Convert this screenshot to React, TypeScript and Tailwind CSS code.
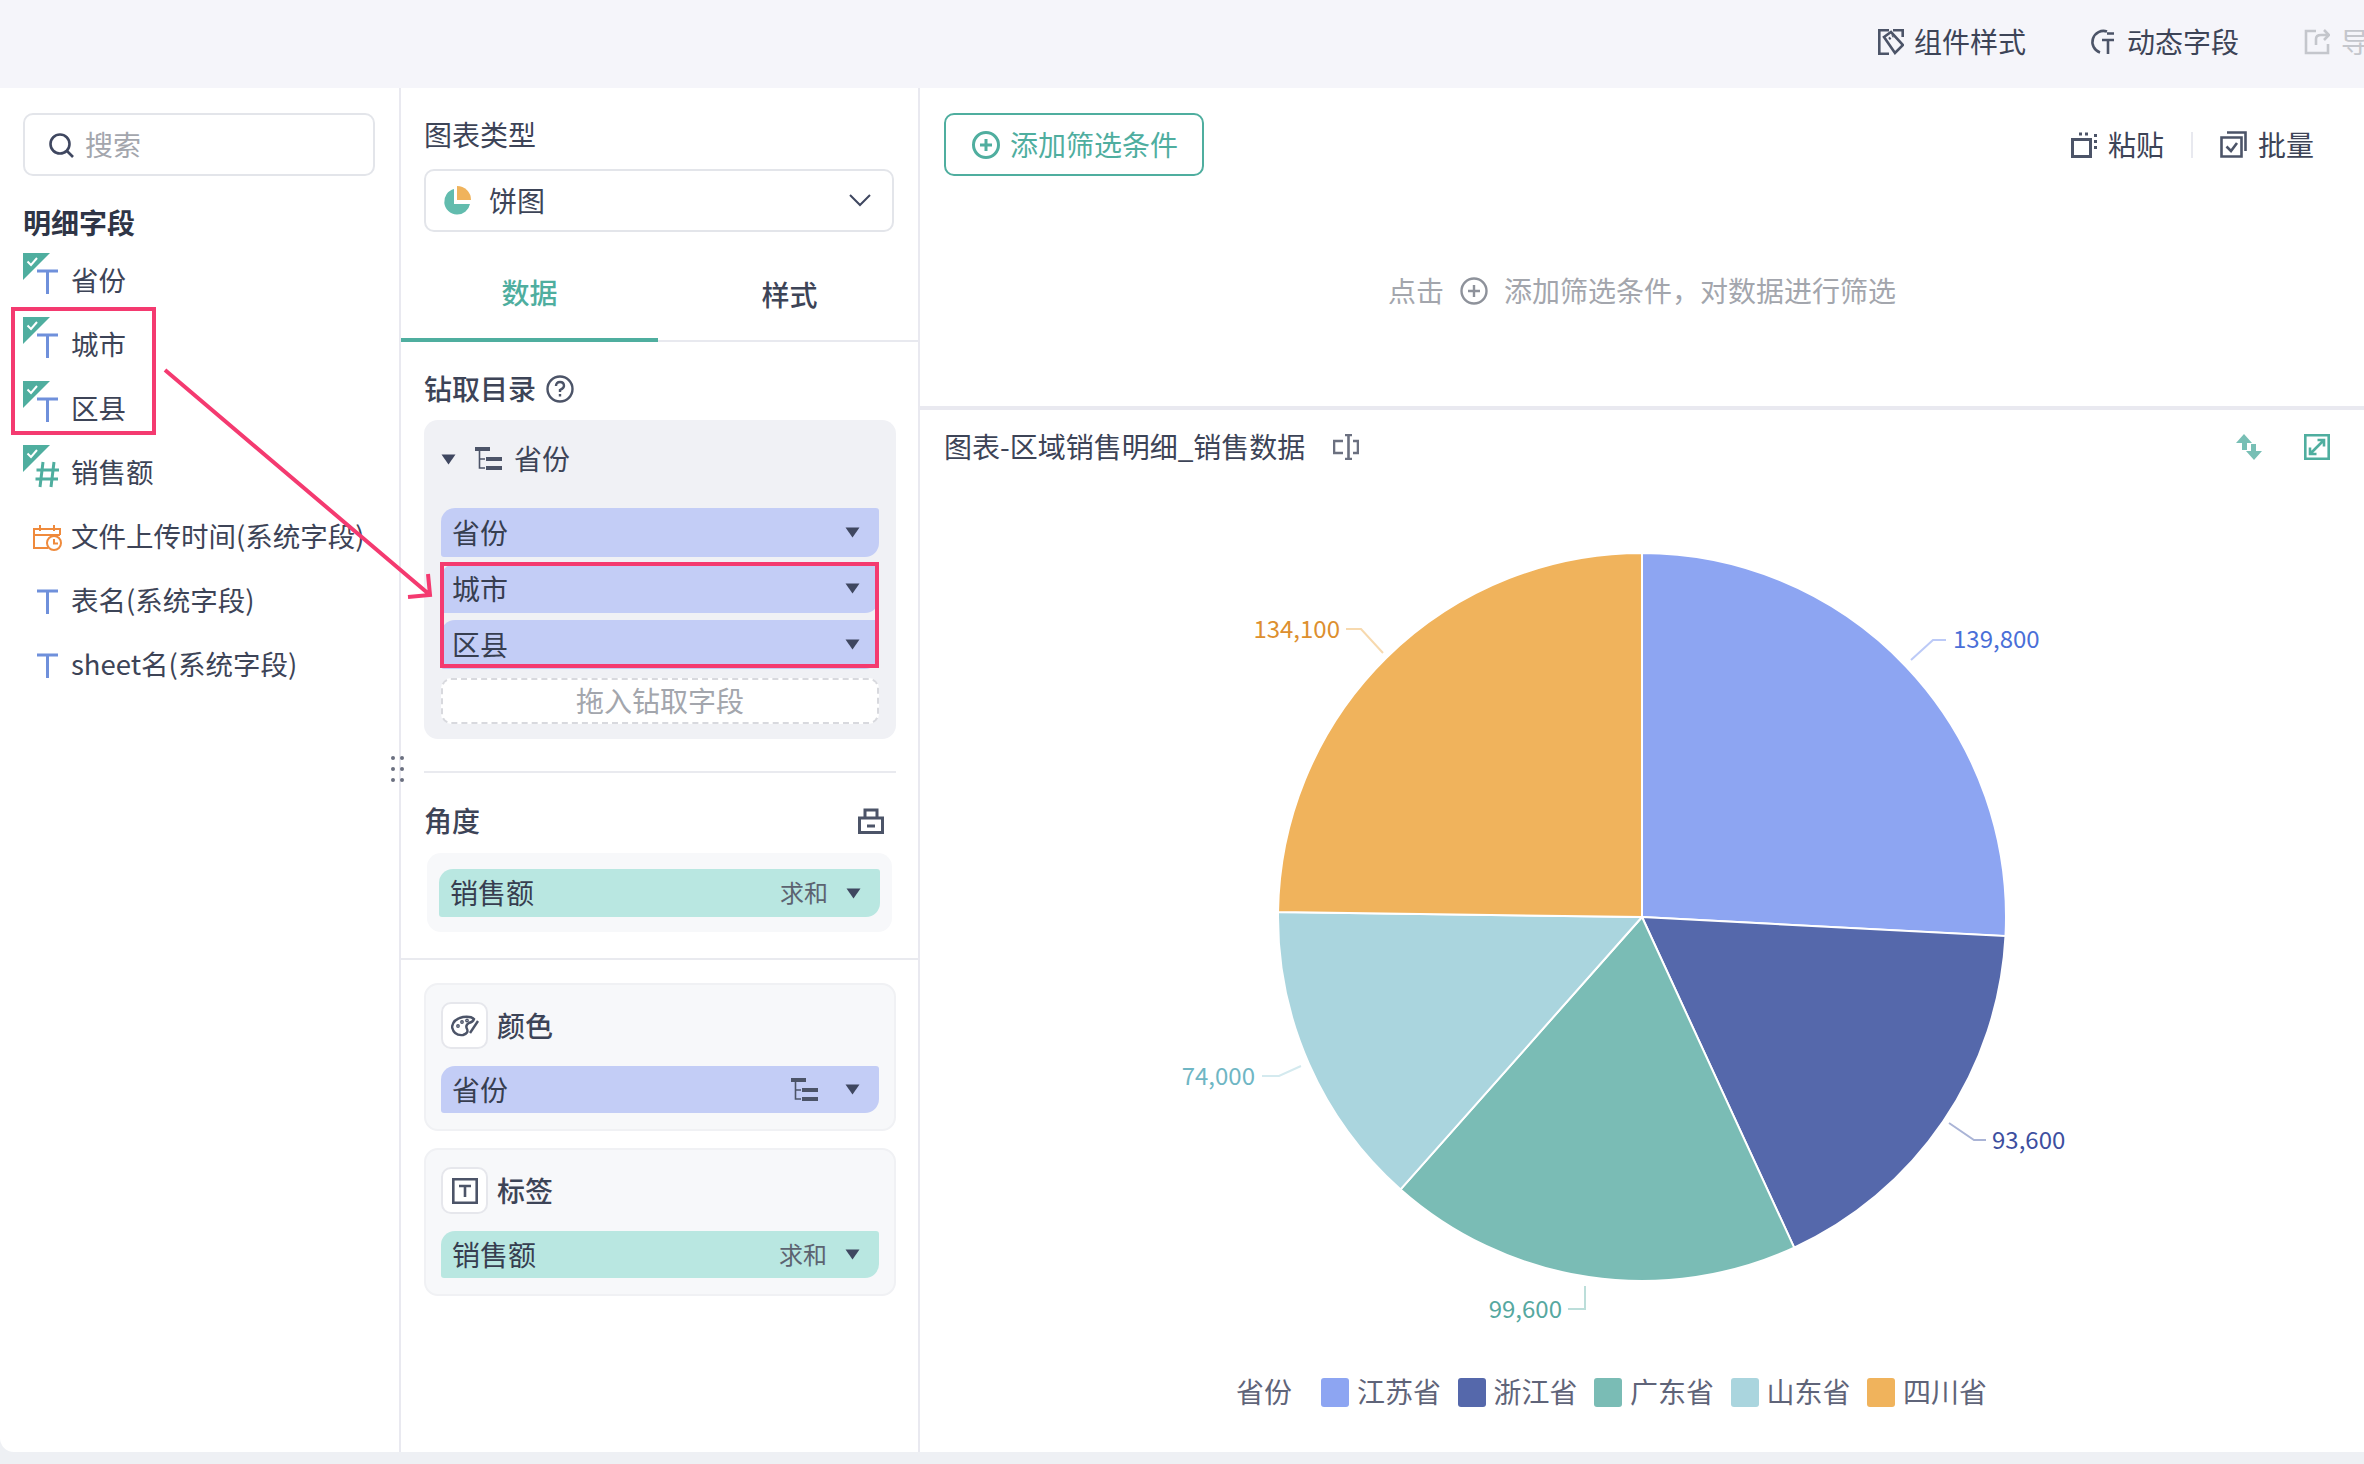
import React from "react";

const slices = [
  { name: "江苏省", value: 139800, color: "#8da5f2" },
  { name: "浙江省", value: 93600, color: "#5568ab" },
  { name: "广东省", value: 99600, color: "#7abcb5" },
  { name: "山东省", value: 74000, color: "#aad5de" },
  { name: "四川省", value: 134100, color: "#f0b35c" },
];

const labels = [
  { text: "139,800", x: 1953, y: 637, anchor: "start", color: "#4a6fd8", line: "1911,660 1933,640 1946,640", lineColor: "#bccaf7" },
  { text: "93,600", x: 1992, y: 1138, anchor: "start", color: "#3d4f9f", line: "1949,1123 1974,1140 1986,1140", lineColor: "#aab4d6" },
  { text: "99,600", x: 1562, y: 1307, anchor: "end", color: "#56a8a0", line: "1585,1286 1585,1309 1568,1309", lineColor: "#bcdeda" },
  { text: "74,000", x: 1255, y: 1074, anchor: "end", color: "#6fb6c4", line: "1301,1066 1279,1076 1262,1076", lineColor: "#d4eaef" },
  { text: "134,100", x: 1340, y: 627, anchor: "end", color: "#dd8f2e", line: "1383,653 1361,629 1346,629", lineColor: "#f7d9ae" },
];

function T({ children, className = "" }: { children: React.ReactNode; className?: string }) {
  return <span className={`mb-[2px] ${className}`}>{children}</span>;
}

function Pie() {
  const cx = 1642;
  const cy = 917;
  const r = 364;
  const total = slices.reduce((s, d) => s + d.value, 0);
  let acc = 0;
  return (
    <svg viewBox="920 484 1444 876" className="w-[1444px] h-[876px] block">
      {slices.map((d) => {
        const a0 = (acc / total) * Math.PI * 2;
        acc += d.value;
        const a1 = (acc / total) * Math.PI * 2;
        const p = (a: number) => `${cx + r * Math.sin(a)} ${cy - r * Math.cos(a)}`;
        const large = a1 - a0 > Math.PI ? 1 : 0;
        return (
          <path
            key={d.name}
            d={`M${cx} ${cy}L${p(a0)}A${r} ${r} 0 ${large} 1 ${p(a1)}Z`}
            fill={d.color}
            stroke="#fff"
            strokeWidth="2"
          />
        );
      })}
      {labels.map((l) => (
        <g key={l.text}>
          <polyline points={l.line} fill="none" stroke={l.lineColor} strokeWidth="2" />
          <text x={l.x} y={l.y} textAnchor={l.anchor as "start" | "end"} dominantBaseline="central" fontSize="24" fill={l.color}>
            {l.text}
          </text>
        </g>
      ))}
    </svg>
  );
}

function Caret({ className = "" }: { className?: string }) {
  return (
    <svg width="15" height="11" viewBox="0 0 15 11" className={className}>
      <path d="M0.5 0.5H14.5L7.5 10.5Z" fill="#3f4760" />
    </svg>
  );
}

function TreeIcon({ className = "" }: { className?: string }) {
  return (
    <svg width="27" height="24" viewBox="0 0 27 24" className={className}>
      <path d="M0 0H15V4H0ZM11 10H27V14H11ZM11 19H27V23H11Z" fill="#4c5468" />
      <path d="M4.5 4V21H10M4.5 12H10" fill="none" stroke="#4c5468" strokeWidth="1.6" />
    </svg>
  );
}

function FieldIcon({ kind, checked }: { kind: "t" | "n" | "d"; checked?: boolean }) {
  return (
    <svg width="48" height="64" viewBox="0 0 48 64" className="shrink-0">
      {kind === "t" && <path d="M14 23H35M24.5 23V46" fill="none" stroke="#6f90db" strokeWidth="3" />}
      {kind === "n" && (
        <path d="M20 22L17 47M31 22L28 47M13.5 30H36M12.5 39H35" fill="none" stroke="#4fae9f" strokeWidth="3" />
      )}
      {kind === "d" && (
        <g fill="none" stroke="#ef8a3c" strokeWidth="2">
          <path d="M25 44H11V25H37V31" />
          <path d="M11 31H37M17 21V27M31 21V27" />
          <circle cx="31" cy="39" r="7" />
          <path d="M31 35V39.5H35" />
        </g>
      )}
      {checked && (
        <>
          <path d="M0 5H27L0 32Z" fill="#4fae9f" />
          <path d="M4.5 13.5L8 17L14 10" fill="none" stroke="#fff" strokeWidth="2" />
        </>
      )}
    </svg>
  );
}

function Field({ name, kind, checked }: { name: string; kind: "t" | "n" | "d"; checked?: boolean }) {
  return (
    <div className="flex items-center h-[64px] whitespace-nowrap text-[#3d4457] text-[27.5px]">
      <FieldIcon kind={kind} checked={checked} />
      <span>{name}</span>
    </div>
  );
}

function Pill({
  name,
  color = "bg-[#c3cdf6]",
  agg,
  tree,
  h = "h-[49px]",
}: {
  name: string;
  color?: string;
  agg?: boolean;
  tree?: boolean;
  h?: string;
}) {
  return (
    <div className={`flex items-center ${h} ${color} rounded-tl-[14px] rounded-br-[14px] rounded-tr-[3px] rounded-bl-[3px] pl-[11px] pr-[19px] text-[#373e50]`}>
      <T className="flex-1">{name}</T>
      {agg && <T className="text-[24px] text-[#5c6370] mr-[18px]">求和</T>}
      {tree && <TreeIcon className="mr-[27px]" />}
      <Caret />
    </div>
  );
}

function Shelf({ icon, title, children }: { icon: React.ReactNode; title: string; children: React.ReactNode }) {
  return (
    <div className="ml-[23px] w-[472px] h-[148px] border-2 border-[#f0f1f4] bg-[#f7f8fa] rounded-[14px] px-[15px] pt-[17px]">
      <div className="flex items-center h-[47px] text-[#3d4457] font-medium">
        <div className="w-[47px] h-[47px] flex items-center justify-center bg-white border-2 border-[#e6e7ec] rounded-[10px] mr-[9px]">
          {icon}
        </div>
        <T>{title}</T>
      </div>
      <div className="mt-[17px]">{children}</div>
    </div>
  );
}

function TopBar() {
  return (
    <div className="h-[88px] pb-[5px] bg-[#f5f5fa] flex items-center justify-end text-[#3d4457] whitespace-nowrap">
      <svg width="26" height="26" viewBox="0 0 26 26" fill="none" stroke="#4c5468" strokeWidth="2.6" className="mr-[10px]">
        <path d="M11 1.3H1.3V24.7H11M15 1.3H24.7V8" />
        <path d="M6 8L17 24L25 16L13 3Z" />
        <path d="M11 10L15 7" strokeDasharray="2 2" />
      </svg>
      <T>组件样式</T>
      <svg width="27" height="27" viewBox="0 0 27 27" fill="none" stroke="#4c5468" strokeWidth="2.6" className="ml-[62px] mr-[12px]">
        <path d="M19 3.5A11 11 0 1 0 12 24.5" />
        <path d="M14 12H26M20 12V26M19 5.5H26" />
      </svg>
      <T>动态字段</T>
      <svg width="26" height="26" viewBox="0 0 26 26" fill="none" stroke="#c4c6cc" strokeWidth="2.6" className="ml-[65px] mr-[11px]">
        <path d="M12 2H2V24H24V15" />
        <path d="M12 16V10Q12 6 17 6H24M20 1L25 6L20 11" />
      </svg>
      <T className="text-[#c4c6cc] mr-[-33px]">导出</T>
    </div>
  );
}

function LeftPanel() {
  return (
    <div className="w-[401px] shrink-0 h-full border-r-2 border-[#e9e9f0] pt-[25px] pl-[23px] relative">
      <div className="w-[352px] h-[63px] border-2 border-[#e3e5ea] rounded-[10px] flex items-center pl-[23px] text-[#a3a6ad]">
        <svg width="26" height="26" viewBox="0 0 26 26" fill="none" stroke="#3f4760" strokeWidth="2.6" className="mr-[11px]">
          <circle cx="12" cy="12" r="9.5" />
          <path d="M19 19L25 25" />
        </svg>
        <T>搜索</T>
      </div>
      <div className="mt-[26px] h-[40px] flex items-center font-bold text-[#2f3546]">
        <span>明细字段</span>
      </div>
      <div className="mt-[6px]">
        <Field name="省份" kind="t" checked />
        <Field name="城市" kind="t" checked />
        <Field name="区县" kind="t" checked />
        <Field name="销售额" kind="n" checked />
        <Field name="文件上传时间(系统字段)" kind="d" />
        <Field name="表名(系统字段)" kind="t" />
        <Field name="sheet名(系统字段)" kind="t" />
      </div>
      <div className="absolute left-[11px] top-[219px] w-[145px] h-[128px] border-4 border-[#f43a70] pointer-events-none" />
      <div className="absolute left-[391px] top-[668px] grid grid-cols-2 gap-x-[9px] gap-y-[7px] pointer-events-none">
        {[0, 1, 2, 3, 4, 5].map((i) => (
          <div key={i} className="w-[4px] h-[4px] rounded-full bg-[#6b7080]" />
        ))}
      </div>
    </div>
  );
}

function MiddlePanel() {
  return (
    <div className="w-[519px] shrink-0 h-full border-r-2 border-[#e9e9f0]">
      <div className="mt-[26px] h-[40px] pl-[23px] flex items-center text-[#3d4457]">
        <span>图表类型</span>
      </div>
      <div className="mt-[15px] ml-[23px] w-[470px] h-[63px] border-2 border-[#e3e5ea] rounded-[10px] flex items-center pl-[15px] pr-[21px] text-[#3d4457]">
        <svg width="30" height="30" viewBox="0 0 30 30" className="mr-[18px]">
          <path d="M13 3A13 13 0 1 0 29 18H13Z" fill="#62bcae" />
          <path d="M16 0A14 14 0 0 1 30 14H16Z" fill="#f0b35c" />
        </svg>
        <T className="flex-1">饼图</T>
        <svg width="22" height="13" viewBox="0 0 22 13" fill="none" stroke="#3f4760" strokeWidth="2">
          <path d="M1 1L11 11L21 1" />
        </svg>
      </div>
      <div className="mt-[30px] h-[80px] flex border-b-2 border-[#e8e9ef]">
        <div className="w-[257px] h-[80px] pb-[14px] flex items-center justify-center border-b-4 border-[#4fae9f] text-[#4fae9f] font-medium">
          <T>数据</T>
        </div>
        <div className="w-[257px] h-[78px] pb-[12px] ml-[3px] flex items-center justify-center text-[#3d4457] font-medium">
          <T>样式</T>
        </div>
      </div>
      <div className="mt-[27px] h-[40px] pl-[23px] flex items-center text-[#3d4457] font-medium">
        <T>钻取目录</T>
        <svg width="28" height="28" viewBox="0 0 28 28" fill="none" stroke="#4c5468" strokeWidth="2.4" className="ml-[10px]">
          <circle cx="14" cy="14" r="12.5" />
          <path d="M10 11Q10 7 14 7T18 11Q18 13 14 15V17M14 19V21.5" />
        </svg>
      </div>
      <div className="mt-[11px] ml-[23px] w-[472px] h-[319px] bg-[#f0f1f5] rounded-[14px] pt-[19px] px-[17px]">
        <div className="h-[40px] flex items-center text-[#3d4457]">
          <Caret className="mr-[19px]" />
          <TreeIcon className="mr-[12px]" />
          <T>省份</T>
        </div>
        <div className="mt-[29px]">
          <Pill name="省份" />
          <div className="relative mt-[7px]">
            <Pill name="城市" />
            <div className="mt-[7px]">
              <Pill name="区县" />
            </div>
            <div className="absolute -left-[1px] right-0 -top-[2px] bottom-[1px] border-4 border-[#f43a70] pointer-events-none" />
          </div>
        </div>
        <div className="mt-[9px] h-[46px] bg-white border-2 border-dashed border-[#d8d9de] rounded-[10px] flex items-center justify-center text-[#a3a6ad]">
          <T>拖入钻取字段</T>
        </div>
      </div>
      <div className="mt-[32px] ml-[23px] w-[472px] h-[2px] bg-[#e9eaef]" />
      <div className="mt-[28px] h-[40px] px-[23px] flex items-center justify-between text-[#3d4457] font-medium">
        <T>角度</T>
        <svg width="26" height="26" viewBox="0 0 26 26" fill="none" stroke="#4c5468" strokeWidth="3" className="mr-[11px]">
          <path d="M1.5 10H24.5V24.5H1.5ZM7 10V2H19V10M9 18H17" />
        </svg>
      </div>
      <div className="mt-[12px] ml-[26px] w-[465px] h-[79px] bg-[#f7f8fa] rounded-[14px] px-[12px] py-[16px]">
        <Pill name="销售额" color="bg-[#b9e7e1]" agg h="h-[48px]" />
      </div>
      <div className="mt-[26px] h-[2px] bg-[#e9eaef]" />
      <div className="mt-[23px]">
        <Shelf
          title="颜色"
          icon={
            <svg width="28" height="22" viewBox="0 0 28 22" fill="none" stroke="#4c5468" strokeWidth="2.4">
              <path d="M1 12Q2 4 12 2Q20 1 23 4Q22 7 18 8Q14 10 16 14Q18 18 12 20Q3 21 1 12Z" />
              <path d="M27 6L19 18" />
              <circle cx="7" cy="11" r="0.7" />
              <circle cx="11" cy="7" r="0.7" />
              <circle cx="16" cy="5.5" r="0.7" />
            </svg>
          }
        >
          <Pill name="省份" tree h="h-[47px]" />
        </Shelf>
      </div>
      <div className="mt-[17px]">
        <Shelf
          title="标签"
          icon={
            <svg width="26" height="26" viewBox="0 0 26 26" fill="none" stroke="#4c5468" strokeWidth="2.6">
              <path d="M1.3 1.3H24.7V24.7H1.3ZM7 8H19M13 8V19" />
            </svg>
          }
        >
          <Pill name="销售额" color="bg-[#b9e7e1]" agg h="h-[47px]" />
        </Shelf>
      </div>
    </div>
  );
}

function RightPanel() {
  return (
    <div className="flex-1 min-w-0 h-full">
      <div className="h-[318px] pt-[25px]">
        <div className="flex items-center justify-between pl-[24px] pr-[50px]">
          <div className="w-[260px] h-[63px] border-2 border-[#4fae9f] rounded-[10px] flex items-center pl-[25px] text-[#4fae9f]">
            <svg width="30" height="30" viewBox="0 0 30 30" fill="none" stroke="#4fae9f" strokeWidth="3" className="mr-[9px]">
              <circle cx="15" cy="15" r="12.5" />
              <path d="M15 9V21M9 15H21" />
            </svg>
            <T>添加筛选条件</T>
          </div>
          <div className="flex items-center text-[#3d4457]">
            <svg width="26" height="26" viewBox="0 0 26 26" fill="none" stroke="#4c5468" strokeWidth="3" className="mr-[11px]">
              <path d="M1.5 7.5H19.5V24.5H1.5Z" />
              <path d="M8 2H19M24.5 2V18" strokeDasharray="3 3" />
            </svg>
            <T>粘贴</T>
            <div className="w-[2px] h-[26px] bg-[#e8e9ef] mx-[27px]" />
            <svg width="27" height="27" viewBox="0 0 27 27" fill="none" stroke="#4c5468" strokeWidth="2.6" className="mr-[11px]">
              <path d="M1.5 6.5H21.5V25.5H1.5Z" />
              <path d="M7 1.5H25.5V20" />
              <path d="M6.5 15.5L11 20L17 12" />
            </svg>
            <T>批量</T>
          </div>
        </div>
        <div className="mt-[95px] h-[40px] flex items-center justify-center text-[#a3a6ad]">
          <T>点击</T>
          <svg width="28" height="28" viewBox="0 0 28 28" fill="none" stroke="#8e929b" strokeWidth="2.4" className="mx-[16px]">
            <circle cx="14" cy="14" r="12.5" />
            <path d="M14 8V20M8 14H20" />
          </svg>
          <T>添加筛选条件，对数据进行筛选</T>
        </div>
      </div>
      <div className="h-[4px] bg-[#e9e9f0]" />
      <div className="h-[74px] flex items-center pl-[24px] pr-[34px] text-[#3d4457]">
        <T>图表-区域销售明细_销售数据</T>
        <svg width="26" height="26" viewBox="0 0 26 26" fill="none" stroke="#6b7080" strokeWidth="2.6" className="ml-[28px]">
          <path d="M10 7H1V19H10M20 7H25V19H20M12 1H19M12 25H19M15.5 1V25" />
        </svg>
        <div className="flex-1" />
        <svg width="26" height="26" viewBox="0 0 26 26" fill="#78bfb5" className="mr-[42px]">
          <path d="M8 0L16 9H11V16H6V9H0ZM18 26L10 17H15V10H20V17H26Z" />
        </svg>
        <svg width="26" height="26" viewBox="0 0 26 26" fill="none" stroke="#4fae9f" strokeWidth="2.6">
          <path d="M1.3 1.3H24.7V24.7H1.3Z" />
          <path d="M6 20L20 6M13.5 6H20V12.5M6 13.5V20H12.5" />
        </svg>
      </div>
      <Pie />
      <div className="h-[64px] flex items-center text-[#5f6479] whitespace-nowrap pl-[316px]">
        <T className="w-[85px]">省份</T>
        {slices.map((s) => (
          <div key={s.name} className="flex items-center w-[136.5px]">
            <svg width="28" height="29" viewBox="0 0 28 29" className="mr-[8px]">
              <rect x="0" y="0" width="28" height="29" rx="3" fill={s.color} />
            </svg>
            <T>{s.name}</T>
          </div>
        ))}
      </div>
    </div>
  );
}

export default function App() {
  return (
    <div className="w-[2364px] h-[1464px] relative overflow-hidden bg-[#eef0f4] text-[28px] leading-none font-['Noto_Sans_CJK_SC',sans-serif]">
      <TopBar />
      <div className="h-[1364px] flex bg-white rounded-bl-[14px] overflow-hidden">
        <LeftPanel />
        <MiddlePanel />
        <RightPanel />
      </div>
      <svg width="2364" height="1464" viewBox="0 0 2364 1464" fill="none" stroke="#f43a70" strokeWidth="4" className="absolute left-0 top-0 pointer-events-none">
        <path d="M165 370L430 595M408 597L430 595L428 574" />
      </svg>
    </div>
  );
}
